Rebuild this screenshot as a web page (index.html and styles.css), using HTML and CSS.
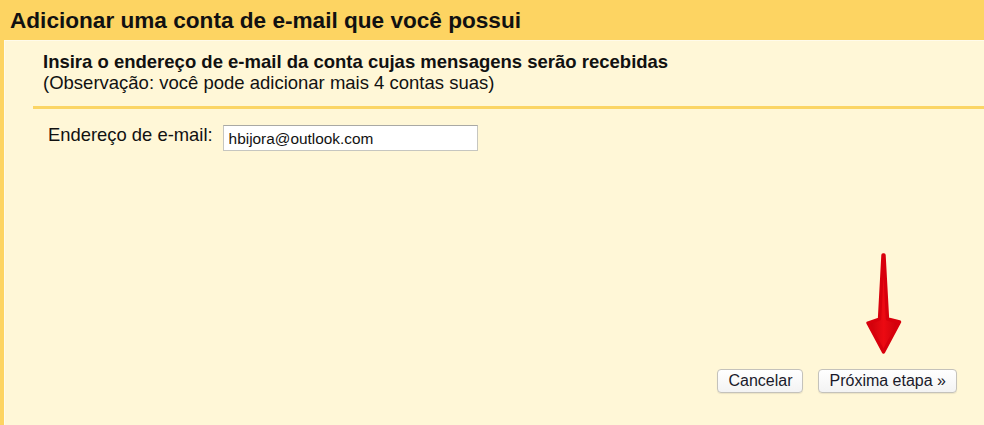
FILE: index.html
```html
<!DOCTYPE html>
<html lang="pt-BR">
<head>
<meta charset="utf-8">
<title>Adicionar uma conta de e-mail</title>
<link rel="stylesheet" href="styles.css">
</head>
<body>
<div class="panel">
  <h1 class="title">Adicionar uma conta de e-mail que você possui</h1>
  <div class="content">
    <div class="intro">
      <p class="intro-strong">Insira o endereço de e-mail da conta cujas mensagens serão recebidas</p>
      <p class="intro-note">(Observação: você pode adicionar mais 4 contas suas)</p>
    </div>
    <div class="form-row">
      <label class="field-label" for="email">Endereço de e-mail:</label>
      <input class="field-input" id="email" type="text" value="hbijora@outlook.com">
    </div>
    <div class="actions">
      <button class="btn" type="button">Cancelar</button>
      <button class="btn" type="button">Próxima etapa »</button>
      <svg class="arrow" width="44" height="104" viewBox="0 0 44 104" aria-hidden="true">
        <defs>
          <linearGradient id="ag" x1="0" y1="0" x2="1" y2="0">
            <stop offset="0" stop-color="#c8000a"/>
            <stop offset="0.5" stop-color="#ec0a12"/>
            <stop offset="1" stop-color="#c8000a"/>
          </linearGradient>
        </defs>
        <polygon points="21,3 22,3 25.5,67 37.5,70 21.5,100 6,71 17.5,67" fill="url(#ag)" stroke="#d8000c" stroke-width="3.4" stroke-linejoin="round"/>
      </svg>
    </div>
  </div>
</div>
</body>
</html>
```

FILE: styles.css
```css
* { box-sizing: border-box; }

html, body {
  margin: 0;
  padding: 0;
  width: 984px;
  height: 425px;
  overflow: hidden;
  background: #fff7d7;
  font-family: "Liberation Sans", Arial, Helvetica, sans-serif;
  color: #111;
}

.panel {
  display: flex;
  flex-direction: column;
  height: 425px;
}

.title {
  margin: 0;
  height: 40px;
  padding: 1px 0 0 10px;
  line-height: 40px;
  font-size: 22.6px;
  font-weight: bold;
  color: #111;
  background: #fdd462;
}

.content {
  flex: 1;
  display: flex;
  flex-direction: column;
  border-left: 4px solid #fdd462;
  box-shadow: inset 1px 1px 0 #fffbea;
}

.intro {
  margin-left: 29px;
  padding: 11px 0 13px 10px;
  border-bottom: 3px solid #fbd565;
}

.intro p {
  margin: 0;
  line-height: 21px;
  font-size: 18.5px;
}

.intro-strong {
  font-weight: bold;
}

.form-row {
  display: flex;
  align-items: flex-start;
  gap: 10px;
  padding: 16px 0 0 44px;
}

.field-label {
  font-size: 18.4px;
  line-height: 20px;
  padding-top: 0;
}

.field-input {
  width: 255px;
  height: 26px;
  margin: 0;
  padding: 2px 5px 0;
  border: 1px solid #c6c6c0;
  border-top-color: #a9a9a4;
  border-radius: 0;
  background: #fff;
  font-family: "Liberation Sans", Arial, Helvetica, sans-serif;
  font-size: 15.4px;
  color: #111;
  outline: none;
}

.actions {
  position: relative;
  margin-top: auto;
  display: flex;
  justify-content: flex-end;
  gap: 15px;
  padding: 0 27px 32px 0;
}

.btn {
  height: 24px;
  margin: 0;
  padding: 0 10px;
  border: 1px solid #c4c2bb;
  border-radius: 4px;
  background: linear-gradient(#ffffff, #f3f3f3);
  box-shadow: 0 1px 1px rgba(0,0,0,0.08);
  font-family: "Liberation Sans", Arial, Helvetica, sans-serif;
  font-size: 16px;
  color: #1a1a2a;
  line-height: 22px;
}

.arrow {
  position: absolute;
  right: 78px;
  bottom: 69px;
}
```
